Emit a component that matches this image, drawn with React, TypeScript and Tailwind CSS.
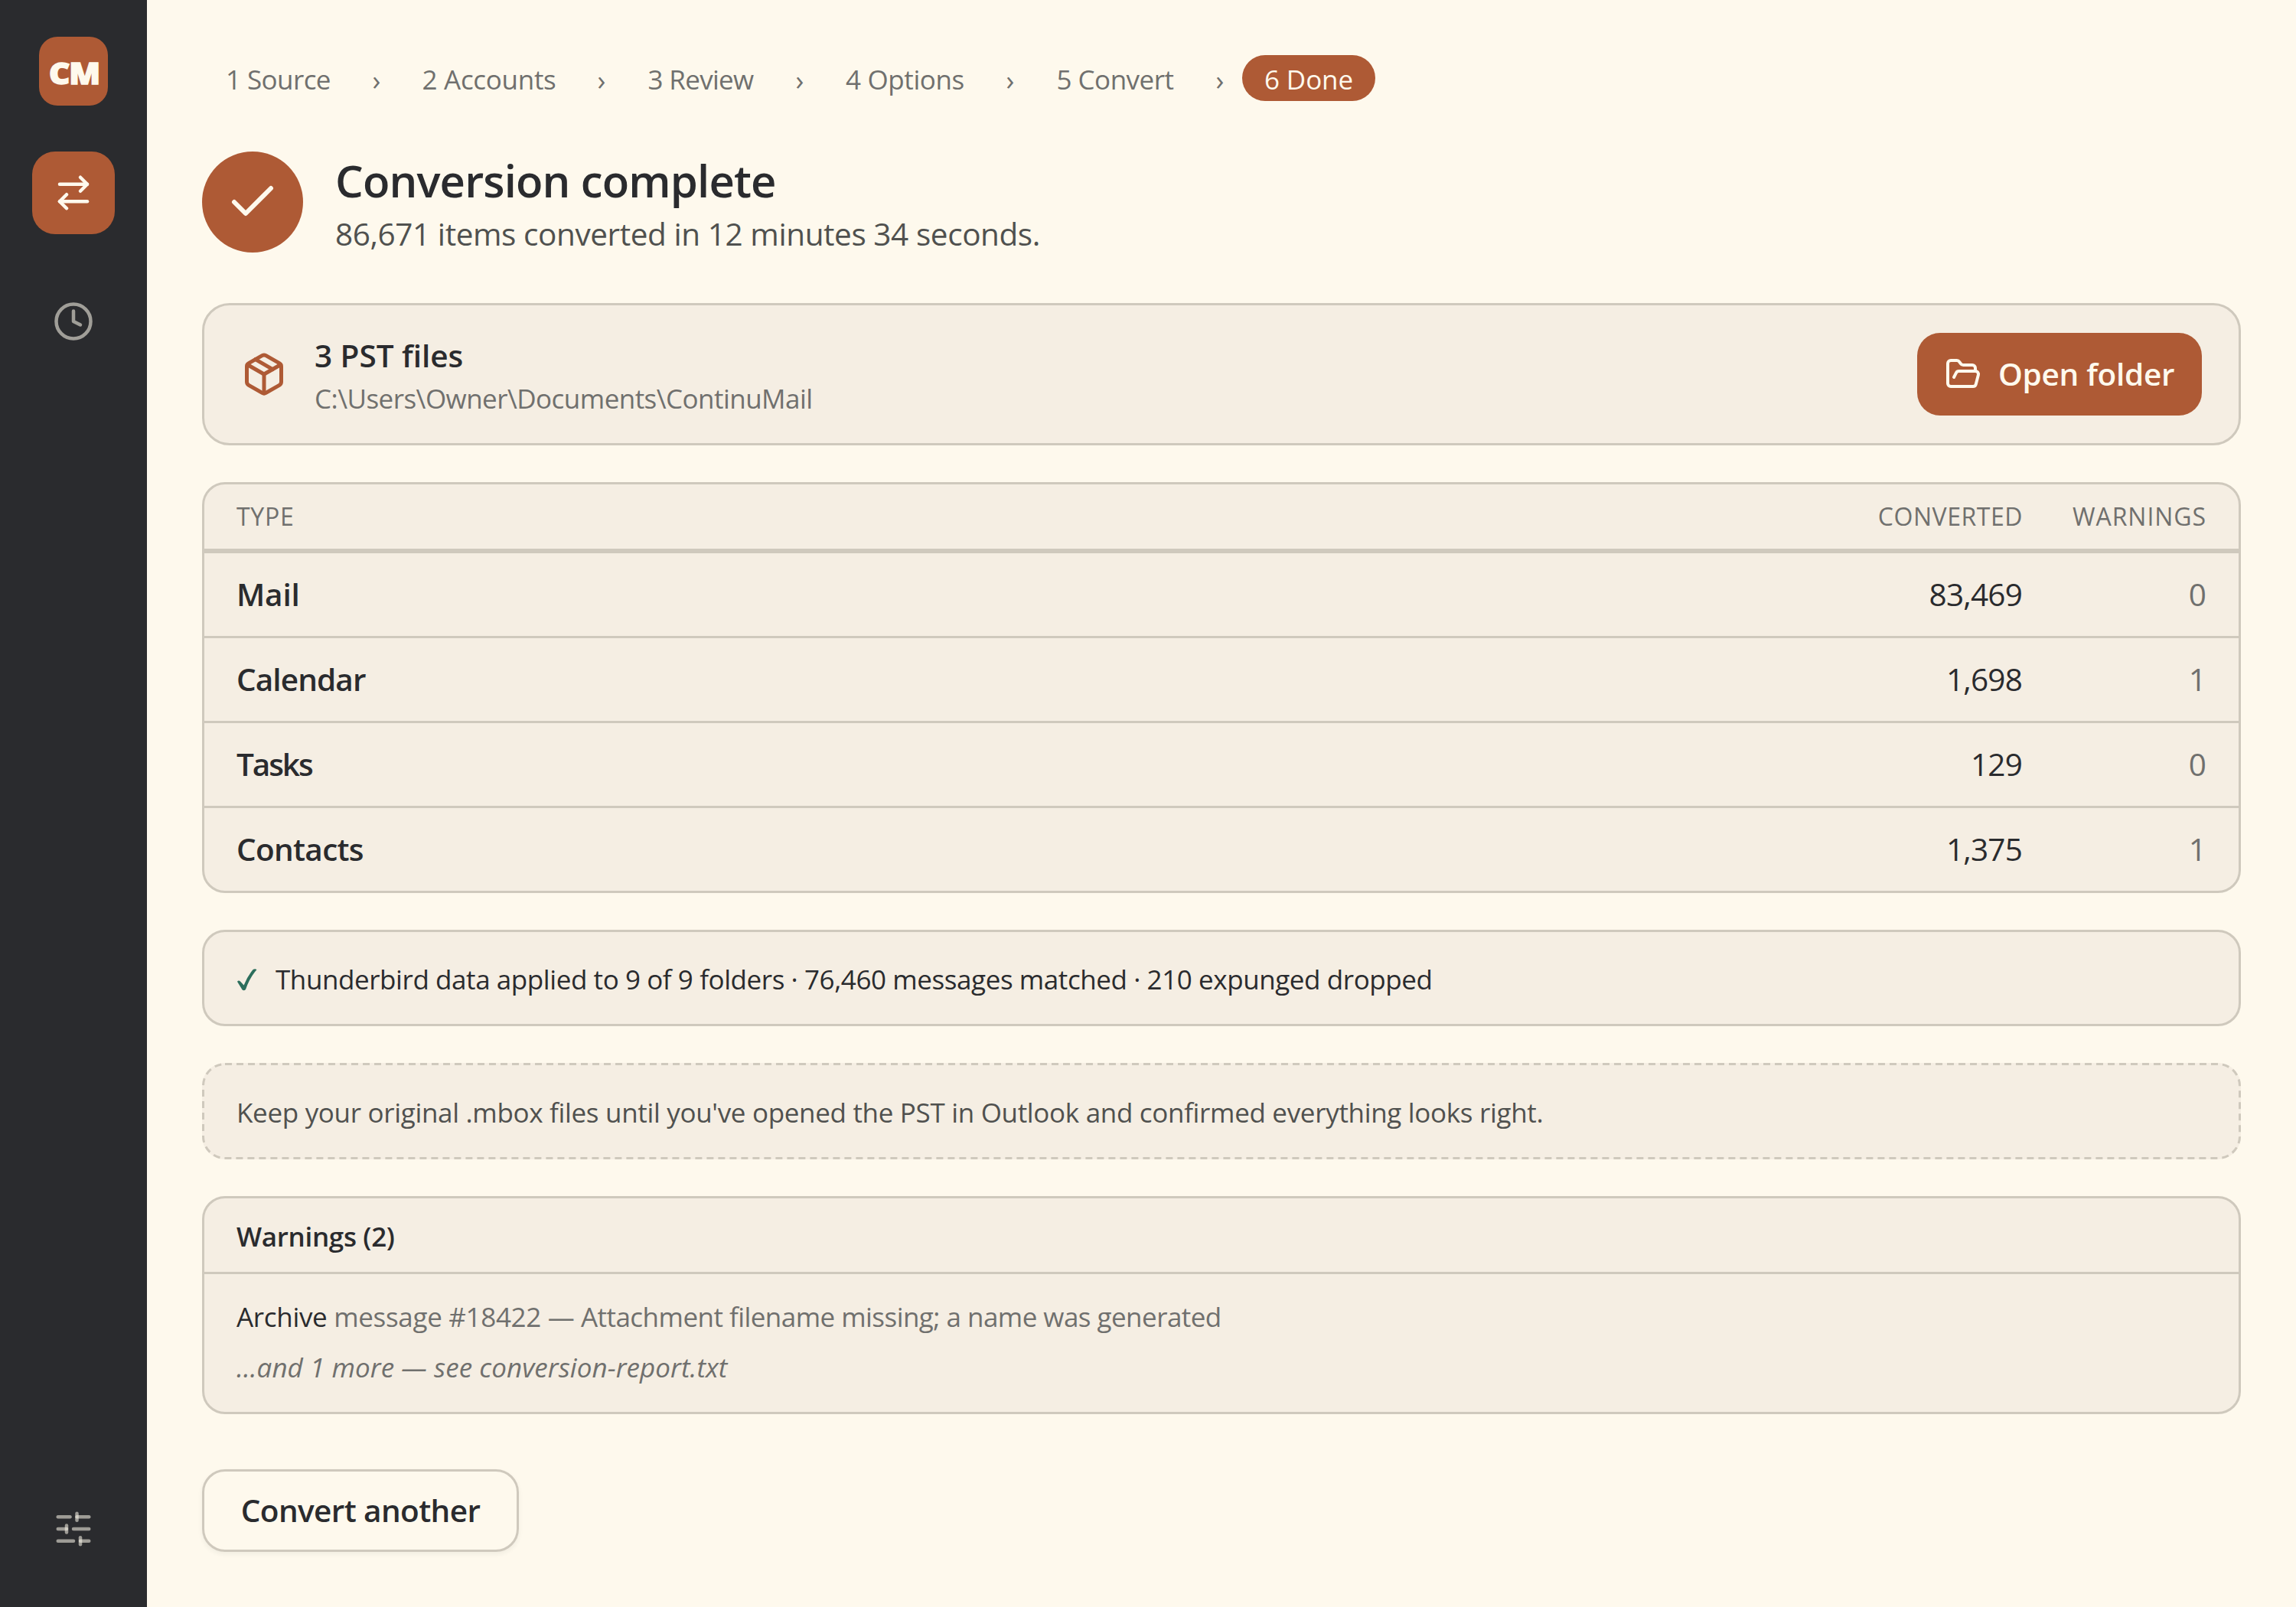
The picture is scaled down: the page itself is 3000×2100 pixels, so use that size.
import {
  ArrowRightLeft,
  Check,
  Clock,
  FolderOpen,
  Package,
  SlidersHorizontal,
} from "lucide-react";

const STEPS = [
  { label: "1 Source", className: "w-[199px] tracking-[-0.58px]" },
  { label: "2 Accounts", className: "w-[236px] tracking-[-0.3px]" },
  { label: "3 Review", className: "w-[201px] tracking-[-0.69px]" },
  { label: "4 Options", className: "w-[217px] tracking-[-0.38px]" },
  { label: "5 Convert", className: "w-[216px] tracking-[-0.5px]" },
  { label: "6 Done", className: "w-[174px] tracking-[-0.1px]", active: true },
];

const ROWS = [
  { type: "Mail", converted: "83,469", warnings: "0", className: "tracking-[-0.2px]" },
  { type: "Calendar", converted: "1,698", warnings: "1", className: "tracking-[-0.9px]" },
  { type: "Tasks", converted: "129", warnings: "0", className: "tracking-[-2.1px]" },
  { type: "Contacts", converted: "1,375", warnings: "1", className: "tracking-[-0.7px]" },
];

function Sidebar() {
  return (
    <aside className="flex w-[192px] shrink-0 flex-col items-center bg-[#2a2b2e] pt-12 pb-12">
      <div className="flex size-[90px] items-center justify-center rounded-3xl bg-[#ae5a35]">
        <span className="scale-x-110 pt-1 pl-px text-[38.5px] leading-none font-extrabold tracking-[-1.2px] text-[#fef9ed] [-webkit-text-stroke:1.4px_#fef9ed]">
          CM
        </span>
      </div>
      <button className="mt-[60px] flex size-[108px] items-center justify-center rounded-[30px] bg-[#ae5a35] text-[#fef9ed]">
        <ArrowRightLeft size={54} />
      </button>
      <button className="mt-[60px] flex size-[108px] items-center justify-center text-[#a09e98]">
        <Clock size={54} />
      </button>
      <button className="mt-auto flex size-[108px] items-center justify-center text-[#fef9ed]/55">
        <SlidersHorizontal size={54} />
      </button>
    </aside>
  );
}

function Steps() {
  return (
    <nav className="flex h-[60px] items-center text-[35px]">
      {STEPS.map((step, i) => (
        <div key={step.label} className="flex items-center">
          {i > 0 && (
            <span className="w-[58px] pt-1.5 text-center text-[36px] leading-[60px] text-[#70706e]">
              ›
            </span>
          )}
          <span
            className={`${step.className} rounded-full pt-1 text-center leading-[56px] ${
              step.active ? "bg-[#ae5a35] text-[#fef9ed]" : "text-[#70706e]"
            }`}
          >
            {step.label}
          </span>
        </div>
      ))}
    </nav>
  );
}

function Results() {
  return (
    <div className="mt-12 overflow-hidden rounded-[30px] border-3 border-[#cfc9bd] bg-[#f5eee3]">
      <div className="grid h-[90px] grid-cols-[1fr_300px_240px] items-center border-b-6 border-[#cfc9bd] px-[42px] text-[32px] text-[#70706e]">
        <span className="tracking-[0.74px]">TYPE</span>
        <span className="text-right tracking-[0.54px]">CONVERTED</span>
        <span className="text-right tracking-[0.94px]">WARNINGS</span>
      </div>
      {ROWS.map((row) => (
        <div
          key={row.type}
          className="grid h-[111px] grid-cols-[1fr_300px_240px] items-center border-b-3 border-[#cfc9bd] px-[42px] text-[40.5px] last:h-[108px] last:border-b-0"
        >
          <span className={`font-semibold ${row.className}`}>{row.type}</span>
          <span className="pr-px text-right tracking-[-0.8px]">{row.converted}</span>
          <span className="text-right text-[#70706e]">{row.warnings}</span>
        </div>
      ))}
    </div>
  );
}

export default function App() {
  return (
    <div className="flex h-[2100px] w-[3000px] bg-[#fef9ed] font-['Open_Sans','Noto_Sans',sans-serif] text-[#2a2b2e]">
      <Sidebar />
      <main className="flex min-w-0 flex-1 flex-col px-[72px] pt-[72px]">
        <Steps />

        <header className="mt-[66px] flex h-[132px] items-center gap-[42px]">
          <div className="flex size-[132px] shrink-0 items-center justify-center rounded-full bg-[#ae5a35] text-[#fef9ed]">
            <Check size={72} />
          </div>
          <div>
            <h1 className="text-[58px] leading-[82px] font-semibold tracking-[-0.85px]">
              Conversion complete
            </h1>
            <p className="text-[40.5px] leading-[57px] tracking-[-0.42px] text-[#50514f]">
              86,671 items converted in 12 minutes 34 seconds.
            </p>
          </div>
        </header>

        <section className="mt-[66px] flex h-[186px] items-center rounded-[36px] border-3 border-[#cfc9bd] bg-[#f5eee3] px-12">
          <Package size={60} className="text-[#ae5a35]" />
          <div className="ml-9">
            <h2 className="text-[40.5px] leading-[63px] font-semibold tracking-[-0.03px]">
              3 PST files
            </h2>
            <p className="text-[35px] leading-[50px] tracking-[-0.54px] text-[#70706e]">
              C:\Users\Owner\Documents\ContinuMail
            </p>
          </div>
          <button className="ml-auto flex h-[108px] w-[372px] items-center gap-[22px] rounded-[30px] bg-[#ae5a35] px-9 text-[#fef9ed]">
            <FolderOpen size={48} className="shrink-0" />
            <span className="text-[40.5px] font-semibold tracking-[-0.29px] whitespace-nowrap">
              Open folder
            </span>
          </button>
        </section>

        <Results />

        <section className="mt-12 flex h-[126px] items-center gap-6 rounded-[30px] border-3 border-[#cfc9bd] bg-[#f5eee3] px-[42px]">
          <svg width="27" height="31" viewBox="0 0 27 31" className="mt-1 text-[#2c6e5c]">
            <path
              d="M1 17.8 Q2.6 15.6 5 17.4 L9.6 22.6 Q14 11 21.6 2 Q24.4 .2 26.4 2.2 Q17 13 12 28 Q9.8 30.4 7.6 28.6 Z"
              fill="currentColor"
            />
          </svg>
          <p className="pt-1 text-[35px] tracking-[-0.42px]">
            Thunderbird data applied to 9 of 9 folders · 76,460 messages matched · 210
            expunged dropped
          </p>
        </section>

        <section className="relative mt-12 flex h-[126px] items-center rounded-[30px] bg-[#f5eee3] px-[45px]">
          {/* drawn by hand, CSS dashes are too short at this width */}
          <svg className="pointer-events-none absolute inset-0 size-full" fill="none">
            <rect
              x="1.5"
              y="1.5"
              width="2661"
              height="123"
              rx="28.5"
              stroke="#cfc9bd"
              strokeWidth="3"
              strokeDasharray="9 6"
            />
          </svg>
          <p className="pt-1 text-[35px] tracking-[-0.32px] text-[#50514f]">
            Keep your original .mbox files until you've opened the PST in Outlook and
            confirmed everything looks right.
          </p>
        </section>

        <section className="mt-12 h-[285px] rounded-[30px] border-3 border-[#cfc9bd] bg-[#f5eee3] text-[35px]">
          <h3 className="flex h-[99px] items-center border-b-3 border-[#cfc9bd] px-[42px] pt-1 font-semibold tracking-[-0.32px]">
            Warnings (2)
          </h3>
          <div className="flex flex-col gap-3 px-[42px] pt-[29px] leading-[54px] text-[#70706e]">
            <p className="tracking-[-0.54px]">
              <span className="tracking-[-0.32px]">
                <span className="text-[#2a2b2e]">Archive</span> message #18422 —
              </span>{" "}
              Attachment filename missing; a name was generated
            </p>
            <p className="tracking-[0.05px] italic">
              …and 1 more — see conversion-report.txt
            </p>
          </div>
        </section>

        <button className="mt-[72px] flex h-[108px] w-[414px] items-center justify-center rounded-[30px] border-3 border-[#cfc9bd] text-[40.5px] font-semibold tracking-[-0.6px] shadow-[0_3px_6px_rgba(42,43,46,0.06)]">
          Convert another
        </button>
      </main>
    </div>
  );
}
